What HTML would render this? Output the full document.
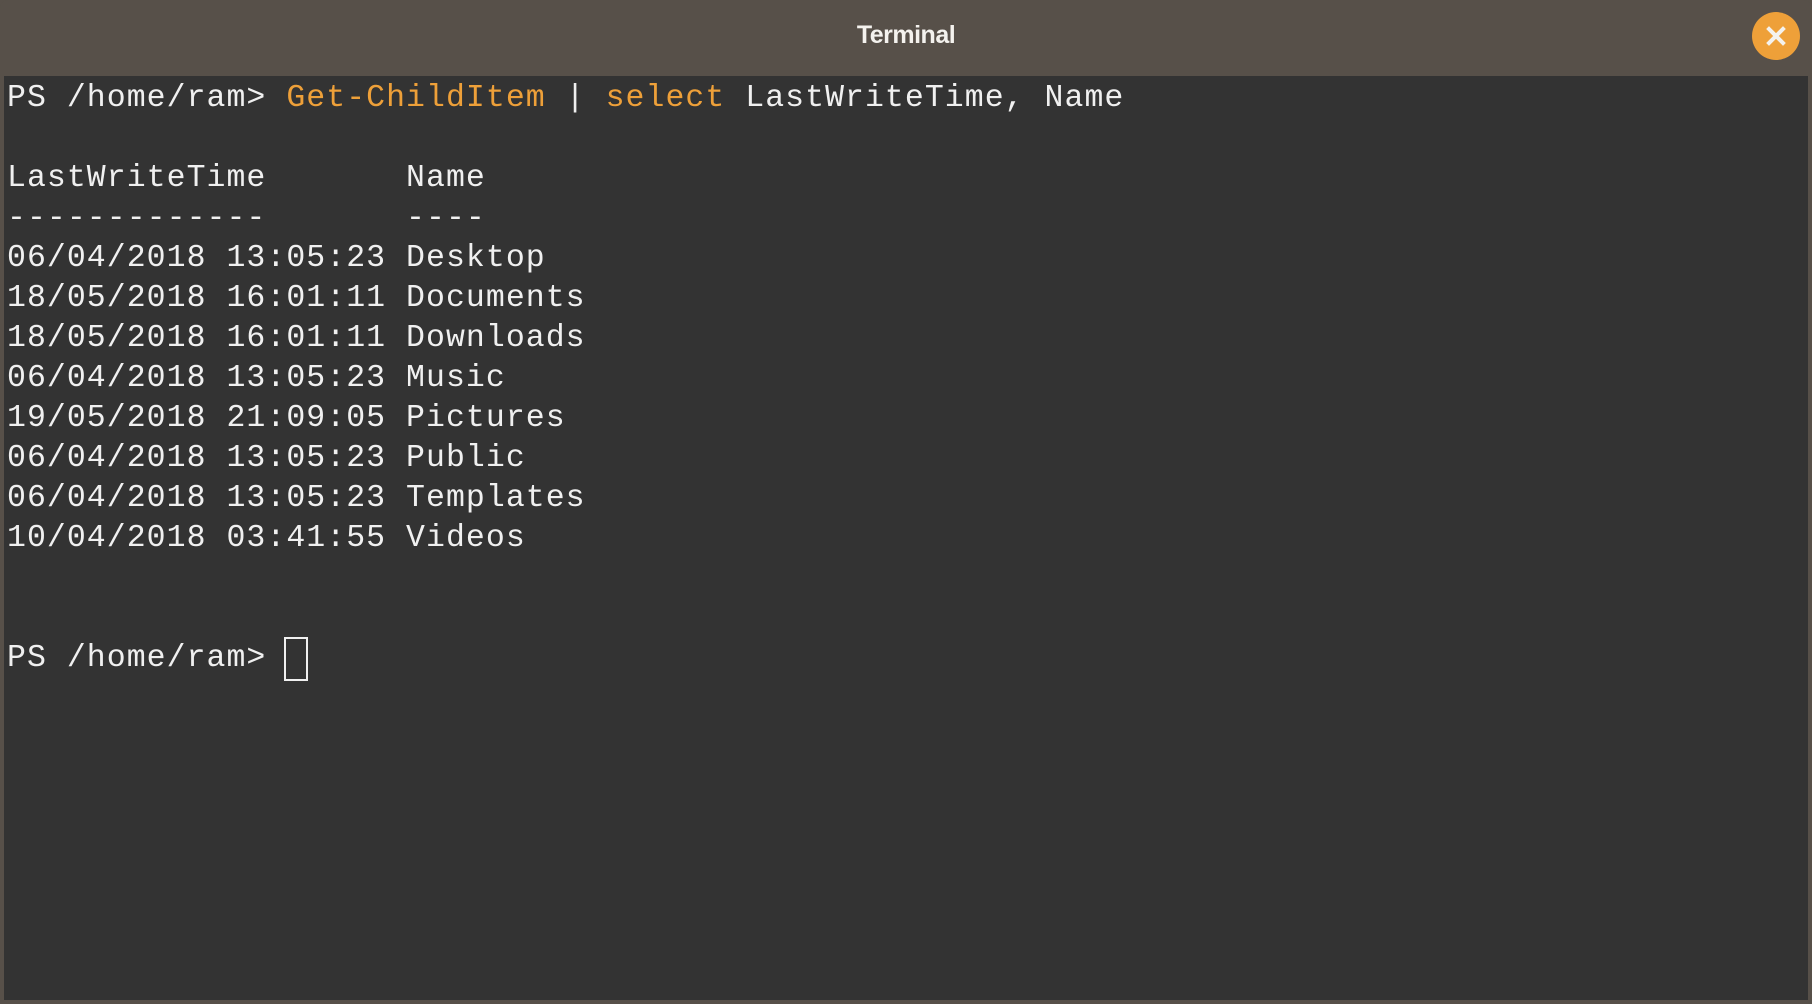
<!DOCTYPE html>
<html><head><style>
html,body{margin:0;padding:0;width:1812px;height:1004px;overflow:hidden;background:#575049;}
.title{position:absolute;left:0;top:0;width:1812px;height:76px;background:#575049;border-radius:8px 8px 0 0;}
.title span{position:absolute;left:0;right:0;top:21px;text-align:center;color:#f4f2ee;font:bold 25px "Liberation Sans",sans-serif;letter-spacing:-0.5px;}
.close{position:absolute;left:1752px;top:12px;width:48px;height:48px;border-radius:50%;background:#eea039;}
.term{position:absolute;left:4px;top:76px;width:1804px;height:924px;background:#333333;}
pre{margin:0;position:absolute;left:3px;top:3px;font-family:"Liberation Mono",monospace;font-size:31.5px;letter-spacing:1.05px;line-height:40px;color:#f0f0f0;}
.o{color:#eea039;}
.cur{position:absolute;left:284px;top:637px;width:24px;height:44px;border:2px solid #f0f0f0;box-sizing:border-box;}
</style></head><body>
<div class="title"><span>Terminal</span>
<div class="close"><svg width="48" height="48"><path d="M17 17L31 31M31 17L17 31" stroke="#f4f2ee" stroke-width="4" stroke-linecap="square"/></svg></div></div>
<div class="term"><pre>PS /home/ram&gt; <span class="o">Get-ChildItem</span> | <span class="o">select</span> LastWriteTime, Name

LastWriteTime       Name
-------------       ----
06/04/2018 13:05:23 Desktop
18/05/2018 16:01:11 Documents
18/05/2018 16:01:11 Downloads
06/04/2018 13:05:23 Music
19/05/2018 21:09:05 Pictures
06/04/2018 13:05:23 Public
06/04/2018 13:05:23 Templates
10/04/2018 03:41:55 Videos


PS /home/ram&gt; </pre></div>
<div class="cur"></div>
</body></html>
